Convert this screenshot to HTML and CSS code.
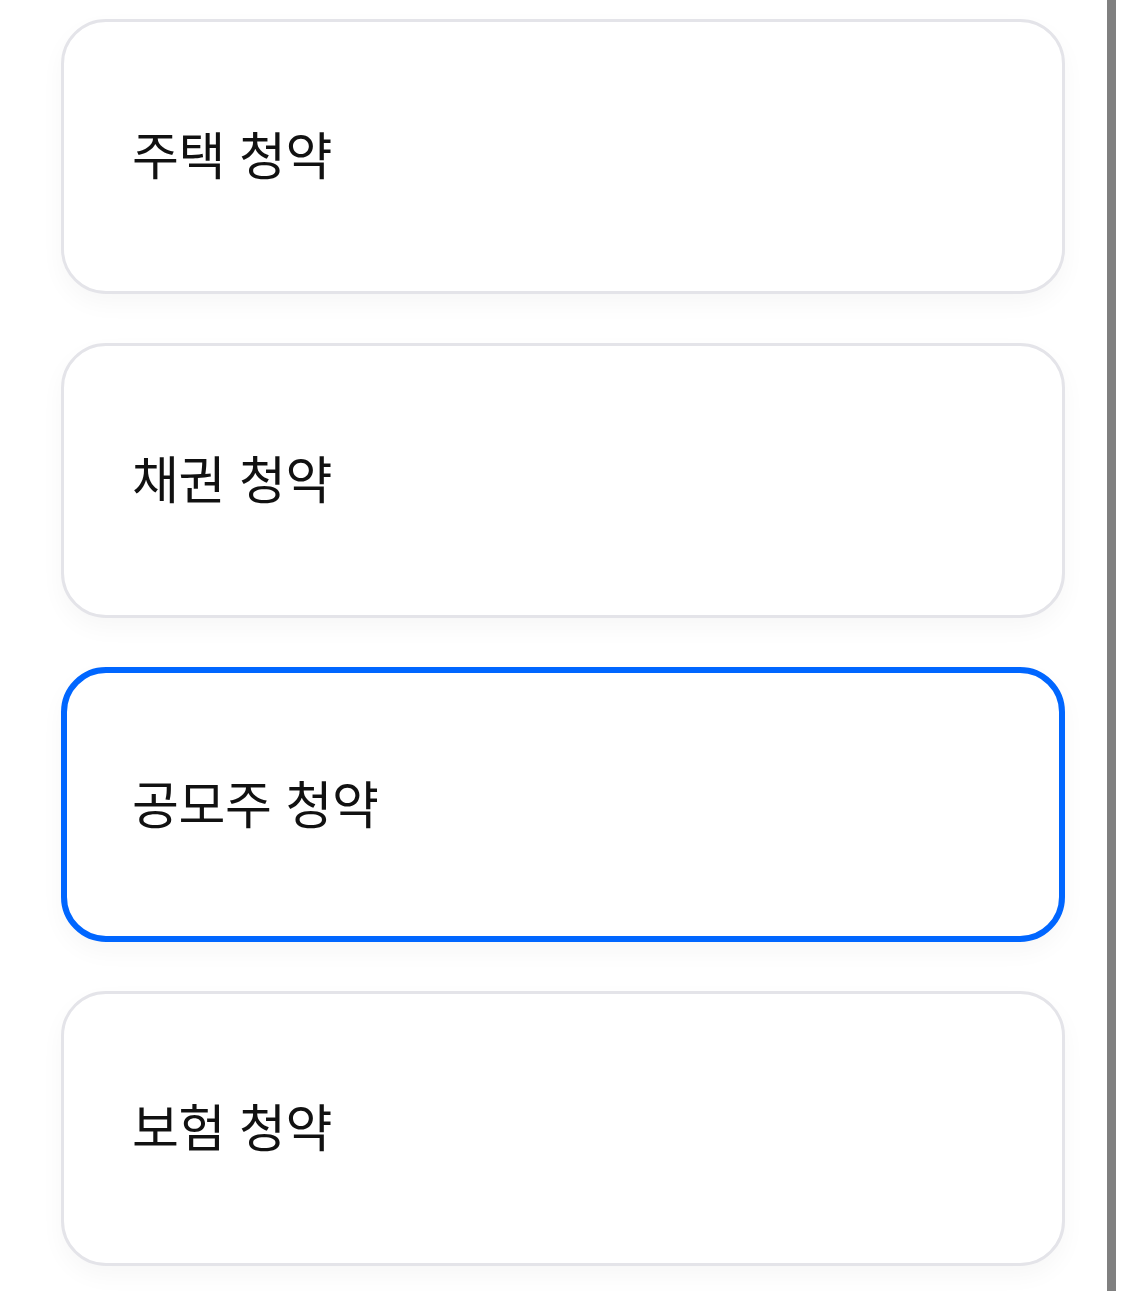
FILE: index.html
```html
<!DOCTYPE html>
<html lang="ko">
<head>
  <meta charset="UTF-8">
  <meta name="viewport" content="width=device-width, initial-scale=1.0">
  <title>청약 선택</title>
  <link rel="stylesheet" href="styles.css">
</head>
<body>
  <div class="page">
    <!-- 청약 종류 목록 -->
    <ul class="option-list">
      <li class="option-card">주택 청약</li>
      <li class="option-card">채권 청약</li>
      <li class="option-card selected">공모주 청약</li>
      <li class="option-card">보험 청약</li>
    </ul>

    <div class="scroll-track">
      <div class="scroll-thumb"></div>
    </div>
  </div>
</body>
</html>
```

FILE: styles.css
```css
body {
  margin: 0;
  padding: 0;
  background-color: #ffffff;
  font-family: "Noto Sans CJK KR", "Noto Sans", sans-serif;
  color: #111111;
  overflow: hidden;
}

.page {
  display: flex;
  height: 1291px;
}

.option-list {
  list-style: none;
  margin: 0;
  padding: 19px 0 0 61px;
  display: flex;
  flex-direction: column;
  gap: 49px;
  width: 1004px;
}

.option-card {
  box-sizing: border-box;
  height: 275px;
  display: flex;
  align-items: center;
  padding: 0 0 8px 68px;
  border: 3px solid #e4e4e9;
  border-radius: 45px;
  background-color: #ffffff;
  box-shadow: 0 10px 24px rgba(0, 0, 0, 0.035);
  font-size: 51px;
  letter-spacing: -0.4px;
}

.option-card.selected {
  border: 6px solid #0066ff;
  padding-left: 65px;
  padding-bottom: 5px;
}

.scroll-track {
  margin-left: 42px;
  width: 9px;
}

.scroll-thumb {
  height: 100%;
  background-color: #808080;
}
```
